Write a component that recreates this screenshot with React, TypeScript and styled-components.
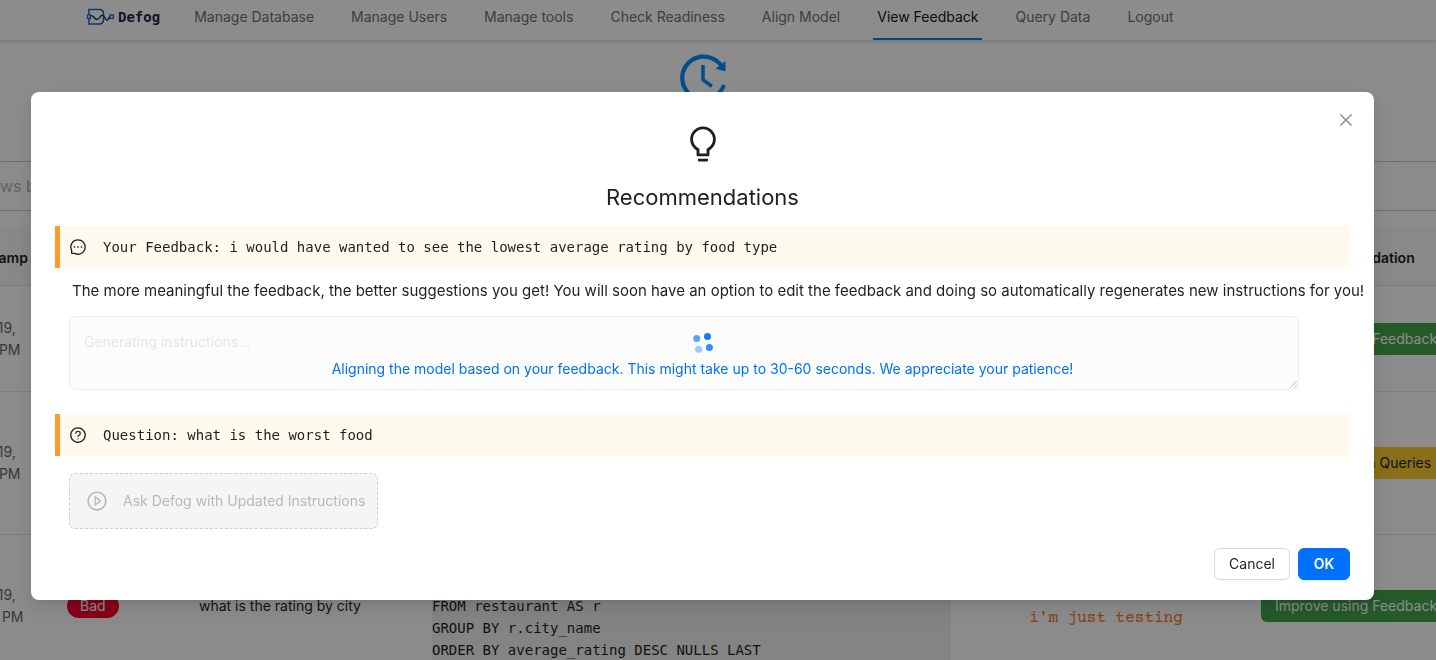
import React from "react";
import styled, { createGlobalStyle, css } from "styled-components";
import {
  AiOutlineBulb,
  AiOutlineClose,
  AiOutlineHistory,
  AiOutlineMessage,
  AiOutlinePlayCircle,
  AiOutlineQuestionCircle,
} from "react-icons/ai";

const sans = `Inter, "Liberation Sans", sans-serif`;
const mono = `"DejaVu Sans Mono", monospace`;
const primary = "#0070ff";

const GlobalStyle = createGlobalStyle`
  *, *::before, *::after { box-sizing: border-box; }
  html, body { margin: 0; height: 100%; overflow: hidden; }
  body {
    background: #fff;
    color: #1f1f1f;
    font-family: ${sans};
    font-size: 14px;
    line-height: 22px;
  }
  button, textarea, input { font: inherit; }
`;

const Page = styled.div`
  height: 100vh;
  overflow: hidden;
`;

const NavBar = styled.header`
  display: flex;
  align-items: center;
  height: 41px;
  padding: 0 86px;
  border-bottom: 1px solid #e8e8e8;
  box-shadow: 0 1px 3px rgba(0, 0, 0, 0.12);
`;

const Logo = styled.a`
  display: flex;
  align-items: center;
  gap: 3px;
  height: 34px;
  margin-right: 30px;
  color: #1c2a44;
  font: bold 14px/22px ${mono};
  text-decoration: none;
  align-self: flex-start;
`;

const NavLinks = styled.nav`
  display: flex;
  align-self: flex-start;
  gap: 29px;
`;

const NavLink = styled.a<{ $active?: boolean }>`
  height: 40px;
  padding: 6px 4px 0;
  border-bottom: 2px solid ${(p) => (p.$active ? "#0080ff" : "transparent")};
  color: ${(p) => (p.$active ? "#111827" : "#6b7280")};
  text-decoration: none;
  white-space: nowrap;
`;

const PageIcon = styled.div`
  display: flex;
  justify-content: center;
  height: 120px;
  padding: 9px 30px 0 0;
  color: #0090ff;
`;

const SearchInput = styled.input`
  display: block;
  width: calc(100% + 206px);
  height: 50px;
  margin: 0 -103px 15px;
  padding: 0 16px;
  border: 1px solid #c8c8c8;
  border-radius: 8px;
  font-size: 16px;
  &::placeholder {
    color: #b4b4b4;
  }
`;

const Table = styled.table`
  width: calc(100% + 94px);
  margin-left: -64px;
  border-collapse: separate;
  border-spacing: 0;
  table-layout: fixed;
`;

const HeadCell = styled.th<{ $center?: boolean }>`
  height: 60px;
  padding: 4px 16px 0;
  background: #fafafa;
  border-bottom: 1px solid #e4e4e4;
  font-weight: 600;
  text-align: ${(p) => (p.$center ? "center" : "left")};
`;

const Row = styled.tr<{ $height: number }>`
  height: ${(p) => p.$height}px;
`;

const Cell = styled.td`
  padding: 16px;
  border-bottom: 1px solid #e4e4e4;
  vertical-align: middle;
`;

const TimeCell = styled(Cell)`
  color: #6a6a6a;
  white-space: pre-line;
`;

const Tag = styled.span`
  display: inline-block;
  padding: 1px 13px;
  border-radius: 12px;
  background: #f5052f;
  color: #fff;
`;

const Code = styled.pre`
  margin: 0;
  background: #f0f0f0;
  font: 14px/22px ${mono};
`;

const Comment = styled.p`
  margin: 0;
  color: #f4741c;
  font: 16px/25px "Courier Prime", "Liberation Mono", monospace;
  text-align: center;
  white-space: pre-line;
`;

const ActionButton = styled.button<{ $tone: "green" | "gold" }>`
  display: block;
  width: 190px;
  height: 32px;
  padding: 0;
  border: 0;
  border-radius: 6px;
  background: ${(p) => (p.$tone === "green" ? "#42a64b" : "#fccb2e")};
  color: ${(p) => (p.$tone === "green" ? "#fff" : "#1f1f1f")};
  text-align: center;
  white-space: nowrap;
`;

const Mask = styled.div`
  position: fixed;
  inset: 0;
  padding: 92px 62px 0 31px;
  background: rgba(0, 0, 0, 0.45);
`;

const Dialog = styled.section`
  position: relative;
  padding: 32px 24px 20px;
  border-radius: 8px;
  background: #fff;
  box-shadow: 0 6px 16px rgba(0, 0, 0, 0.08), 0 3px 6px -4px rgba(0, 0, 0, 0.12),
    0 9px 28px 8px rgba(0, 0, 0, 0.05);
`;

const CloseButton = styled.button`
  position: absolute;
  top: 17px;
  right: 17px;
  display: grid;
  place-items: center;
  width: 22px;
  height: 22px;
  padding: 0;
  border: 0;
  background: none;
  color: #8c8c8c;
`;

const DialogHeader = styled.header`
  display: flex;
  flex-direction: column;
  align-items: center;
  gap: 16px;
  margin-bottom: 12px;
`;

const Title = styled.h1`
  margin: 0;
  font-size: 22px;
  font-weight: 400;
  line-height: 34px;
`;

const Callout = styled.div`
  display: flex;
  align-items: center;
  gap: 16px;
  height: 42px;
  padding: 0 9px;
  border-left: 5px solid #ff9a2a;
  background: #fff9ee;
  font: 14px/22px ${mono};
`;

const Hint = styled.p`
  margin: 0;
  padding: 11px 0 13px 17px;
  font-size: 15px;
  line-height: 24px;
  white-space: nowrap;
`;

const Generating = styled.div`
  position: relative;
  margin-bottom: 24px;
  padding: 0 51px 0 14px;
`;

const Instructions = styled.textarea`
  display: block;
  width: 100%;
  height: 74px;
  padding: 14px;
  border: 1px solid #d9d9d9;
  border-radius: 6px;
  background: #f8f8f8;
  opacity: 0.4;
  resize: vertical;
  &::placeholder {
    color: #bfbfbf;
  }
`;

const Loading = styled.div`
  position: absolute;
  inset: 0;
  display: flex;
  flex-direction: column;
  align-items: center;
  gap: 4px;
  padding-top: 16px;
  color: ${primary};
`;

const buttonBase = css`
  height: 32px;
  padding: 0 14px;
  border-radius: 6px;
`;

const AskButton = styled.button`
  display: flex;
  align-items: center;
  gap: 15px;
  height: 56px;
  margin: 17px 14px 19px;
  padding: 0 12px 0 16px;
  border: 1px dashed #d0d0d0;
  border-radius: 6px;
  background: #f5f5f5;
  color: #b8b8b8;
`;

const Footer = styled.footer`
  display: flex;
  justify-content: flex-end;
  gap: 8px;
`;

const CancelButton = styled.button`
  ${buttonBase}
  border: 1px solid #d9d9d9;
  background: #fff;
  color: #1f1f1f;
  box-shadow: 0 2px 0 rgba(0, 0, 0, 0.02);
`;

const OkButton = styled.button`
  ${buttonBase}
  min-width: 52px;
  border: 1px solid ${primary};
  background: ${primary};
  color: #fff;
  font-weight: 600;
  box-shadow: 0 2px 0 rgba(5, 145, 255, 0.1);
`;

const links = [
  "Manage Database",
  "Manage Users",
  "Manage tools",
  "Check Readiness",
  "Align Model",
  "View Feedback",
  "Query Data",
  "Logout",
];

const sql = `SELECT r.city_name,
  AVG(r.rating) AS average_rating
FROM restaurant AS r
GROUP BY r.city_name
ORDER BY average_rating DESC NULLS LAST`;

function LogoMark() {
  return (
    <svg width="29" height="18" viewBox="0 0 29 18" fill="none" aria-hidden="true">
      <path d="M3 6.5V1.5H13.5Q17.5 1.5 17.5 6V11Q17.5 16 13.5 16H3V10.5" stroke="#1d5fe0" strokeWidth="1.5" />
      <rect x="1.5" y="7" width="3" height="3.4" stroke="#1d5fe0" strokeWidth="1.3" />
      <rect x="24" y="7" width="3.4" height="3.4" stroke="#1d5fe0" strokeWidth="1.3" />
      <path
        d="M5 7.7C7.5 7 8.5 11.5 11 11.5C13.5 11.5 14 7.2 16.5 7.2C19 7.2 18.8 12 21 12C22.8 12 22.8 9 24 8.7"
        stroke="#1c2a44"
        strokeWidth="1.3"
      />
    </svg>
  );
}

function Spinner() {
  return (
    <svg width="22" height="22" viewBox="0 0 22 22" fill={primary} aria-hidden="true">
      <circle cx="4.7" cy="6.5" r="3.5" opacity="0.65" />
      <circle cx="15.5" cy="4.6" r="3.5" opacity="0.94" />
      <circle cx="17.4" cy="15.4" r="3.5" opacity="0.8" />
      <circle cx="6.6" cy="17.3" r="3.5" opacity="0.36" />
    </svg>
  );
}

export default function App() {
  return (
    <>
      <GlobalStyle />
      <Page>
        <NavBar>
          <Logo href="#home">
            <LogoMark />
            Defog
          </Logo>
          <NavLinks>
            {links.map((label) => (
              <NavLink key={label} href="#" $active={label === "View Feedback"}>
                {label}
              </NavLink>
            ))}
          </NavLinks>
        </NavBar>
        <PageIcon>
          <AiOutlineHistory size={56} />
        </PageIcon>
        <SearchInput aria-label="Filter rows" placeholder="Filter the rows by text" />
        <Table>
          <colgroup>
            <col width="115" />
            <col width="132" />
            <col width="233" />
            <col />
            <col width="278" />
            <col width="221" />
          </colgroup>
          <thead>
            <tr>
              <HeadCell>Timestamp</HeadCell>
              <HeadCell />
              <HeadCell />
              <HeadCell />
              <HeadCell />
              <HeadCell $center>Recommendation</HeadCell>
            </tr>
          </thead>
          <tbody>
            <Row $height={106}>
              <TimeCell>{"March 19,\n4:41:11 PM"}</TimeCell>
              <Cell />
              <Cell />
              <Cell />
              <Cell />
              <Cell>
                <ActionButton $tone="green">Improve using Feedback</ActionButton>
              </Cell>
            </Row>
            <Row $height={143}>
              <TimeCell>{"March 19,\n4:41:11 PM"}</TimeCell>
              <Cell />
              <Cell />
              <Cell />
              <Cell />
              <Cell>
                <ActionButton $tone="gold">Add to Golden Queries</ActionButton>
              </Cell>
            </Row>
            <Row $height={143}>
              <TimeCell>{"March 19,\n4:31:10 PM"}</TimeCell>
              <Cell>
                <Tag>Bad</Tag>
              </Cell>
              <Cell>what is the rating by city</Cell>
              <Cell>
                <Code>{sql}</Code>
              </Cell>
              <Cell>
                <Comment>{"this was good,\ni'm just testing"}</Comment>
              </Cell>
              <Cell>
                <ActionButton $tone="green">Improve using Feedback</ActionButton>
              </Cell>
            </Row>
          </tbody>
        </Table>
      </Page>
      <Mask>
        <Dialog role="dialog" aria-modal="true" aria-labelledby="dialog-title">
          <CloseButton aria-label="Close">
            <AiOutlineClose size={18} />
          </CloseButton>
          <DialogHeader>
            <AiOutlineBulb size={40} />
            <Title id="dialog-title">Recommendations</Title>
          </DialogHeader>
          <Callout>
            <AiOutlineMessage size={18} />
            Your Feedback: i would have wanted to see the lowest average rating by food type
          </Callout>
          <Hint>
            The more meaningful the feedback, the better suggestions you get! You will soon have an option to edit the
            feedback and doing so automatically regenerates new instructions for you!
          </Hint>
          <Generating>
            <Instructions disabled aria-label="Instructions" placeholder="Generating instructions..." />
            <Loading role="status">
              <Spinner />
              Aligning the model based on your feedback. This might take up to 30-60 seconds. We appreciate your
              patience!
            </Loading>
          </Generating>
          <Callout>
            <AiOutlineQuestionCircle size={18} />
            Question: what is the worst food
          </Callout>
          <AskButton disabled>
            <AiOutlinePlayCircle size={22} />
            Ask Defog with Updated Instructions
          </AskButton>
          <Footer>
            <CancelButton>Cancel</CancelButton>
            <OkButton>OK</OkButton>
          </Footer>
        </Dialog>
      </Mask>
    </>
  );
}
